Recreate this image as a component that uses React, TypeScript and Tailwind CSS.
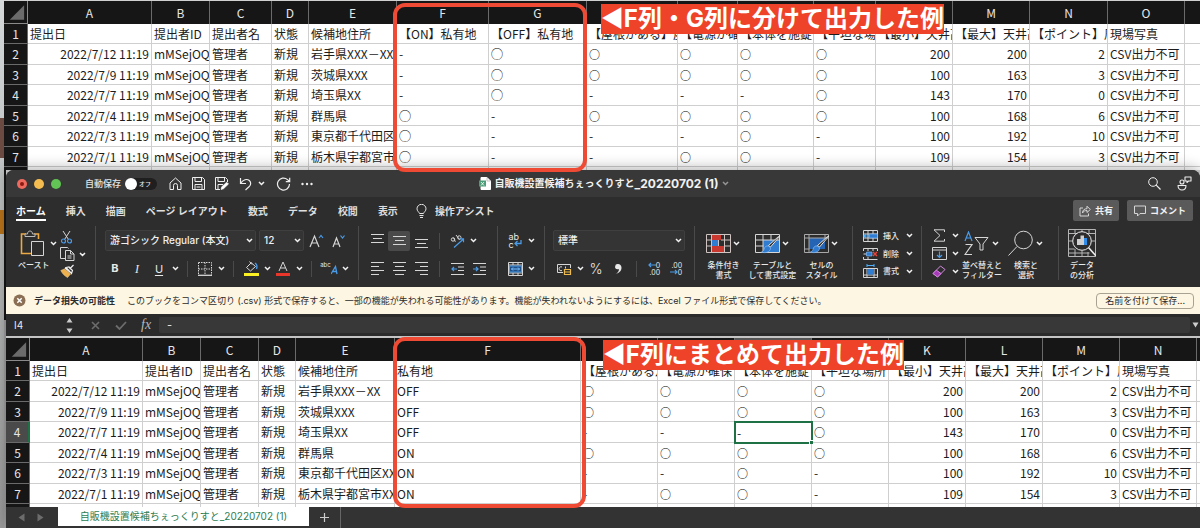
import type { ReactNode } from 'react';

type Column = { letter: string; width: string; title: string; align?: 'right' };

const TOP_COLUMNS: Column[] = [
  { letter: 'A', width: 'w-[124px]', title: '提出日', align: 'right' },
  { letter: 'B', width: 'w-[58px]', title: '提出者ID' },
  { letter: 'C', width: 'w-[62px]', title: '提出者名' },
  { letter: 'D', width: 'w-[37px]', title: '状態' },
  { letter: 'E', width: 'w-[88px]', title: '候補地住所' },
  { letter: 'F', width: 'w-[92px]', title: '【ON】私有地' },
  { letter: 'G', width: 'w-[98px]', title: '【OFF】私有地' },
  { letter: 'H', width: 'w-[91px]', title: '【屋根がある】屋' },
  { letter: 'I', width: 'w-[60px]', title: '【電源が確保' },
  { letter: 'J', width: 'w-[76px]', title: '【本体を施錠' },
  { letter: 'K', width: 'w-[62px]', title: '【平坦な場所' },
  { letter: 'L', width: 'w-[77px]', title: '【最小】天井高', align: 'right' },
  { letter: 'M', width: 'w-[77px]', title: '【最大】天井高', align: 'right' },
  { letter: 'N', width: 'w-[78px]', title: '【ポイント】周', align: 'right' },
  { letter: 'O', width: 'w-[77px]', title: '現場写真' },
];

const BOTTOM_COLUMNS: Column[] = [
  { letter: 'A', width: 'w-[113px]', title: '提出日', align: 'right' },
  { letter: 'B', width: 'w-[58px]', title: '提出者ID' },
  { letter: 'C', width: 'w-[58px]', title: '提出者名' },
  { letter: 'D', width: 'w-[37px]', title: '状態' },
  { letter: 'E', width: 'w-[99px]', title: '候補地住所' },
  { letter: 'F', width: 'w-[186px]', title: '私有地' },
  { letter: 'G', width: 'w-[77px]', title: '【屋根がある】' },
  { letter: 'H', width: 'w-[77px]', title: '【電源が確保' },
  { letter: 'I', width: 'w-[77px]', title: '【本体を施錠' },
  { letter: 'J', width: 'w-[77px]', title: '【平坦な場所で' },
  { letter: 'K', width: 'w-[77px]', title: '【最小】天井高', align: 'right' },
  { letter: 'L', width: 'w-[77px]', title: '【最大】天井高', align: 'right' },
  { letter: 'M', width: 'w-[77px]', title: '【ポイント】周', align: 'right' },
  { letter: 'N', width: 'w-[77px]', title: '現場写真' },
];

const PEOPLE = [
  ['2022/7/12 11:19', 'mMSejOQ', '管理者', '新規', '岩手県XXX－XX'],
  ['2022/7/9 11:19', 'mMSejOQ', '管理者', '新規', '茨城県XXX'],
  ['2022/7/7 11:19', 'mMSejOQ', '管理者', '新規', '埼玉県XX'],
  ['2022/7/4 11:19', 'mMSejOQ', '管理者', '新規', '群馬県'],
  ['2022/7/3 11:19', 'mMSejOQ', '管理者', '新規', '東京都千代田区XX'],
  ['2022/7/1 11:19', 'mMSejOQ', '管理者', '新規', '栃木県宇都宮市XX'],
];

const CHECKS = [
  ['○', '○', '○', '○', '200', '200', '2', 'CSV出力不可'],
  ['○', '○', '○', '○', '100', '163', '3', 'CSV出力不可'],
  ['-', '-', '-', '○', '143', '170', '0', 'CSV出力不可'],
  ['○', '○', '○', '○', '100', '168', '6', 'CSV出力不可'],
  ['-', '-', '○', '-', '100', '192', '10', 'CSV出力不可'],
  ['-', '○', '○', '-', '109', '154', '3', 'CSV出力不可'],
];

const SPLIT = [['-', '◯'], ['-', '◯'], ['-', '◯'], ['◯', '-'], ['◯', '-'], ['◯', '-']];
const MERGED = [['OFF'], ['OFF'], ['OFF'], ['ON'], ['ON'], ['ON']];

const TOP_ROWS = PEOPLE.map((p, i) => [...p, ...SPLIT[i], ...CHECKS[i]]);
const BOTTOM_ROWS = PEOPLE.map((p, i) => [...p, ...MERGED[i], ...CHECKS[i]]);

function CellText({ text }: { text: string }) {
  if (text === '○') return <span className="text-[11px] font-medium text-black">{text}</span>;
  if (text === '◯') return <span className="font-medium text-black">{text}</span>;
  return <>{text}</>;
}

function Sheet({ columns, rows, label, selected }: {
  columns: Column[];
  rows: string[][];
  label: string;
  selected?: { row: number; column: number };
}) {
  const body = [columns.map((c) => c.title), ...rows];
  return (
    <table aria-label={label} className="w-full table-fixed border-separate border-spacing-0 bg-white font-['Noto_Sans_CJK_JP',sans-serif] text-[12px] leading-4 text-[#1c1c1c]">
      <colgroup>
        <col className="w-[24px]" />
        {columns.map((c) => <col key={c.letter} className={c.width} />)}
        <col />
      </colgroup>
      <thead>
        <tr className="h-[23px] bg-[#161616] text-[#e6e6e6]">
          <td className="border-r border-b border-[#8a8a8a] p-0">
            <svg viewBox="0 0 24 22" className="block h-[22px] w-full" aria-hidden="true"><path d="M21 4v15H6z" fill="#6b6b6b" /></svg>
          </td>
          {columns.map((c, i) => (
            <th key={c.letter} scope="col" className={selected?.column === i ? 'border-r border-[#6a6a6a] bg-[#555] p-0 font-normal' : 'border-r border-[#6a6a6a] p-0 font-normal'}>{c.letter}</th>
          ))}
          <td className="p-0" />
        </tr>
      </thead>
      <tbody>
        {body.map((cells, r) => (
          <tr key={r} className="odd:h-5 even:h-[21px]">
            <th scope="row" className={selected?.row === r ? 'border-r-2 border-b border-r-[#1e7145] border-b-[#6a6a6a] bg-[#4a4a4a] p-0 font-normal text-[#e6e6e6]' : 'border-r border-b border-[#6a6a6a] bg-[#161616] p-0 font-normal text-[#e6e6e6]'}>{r + 1}</th>
            {cells.map((text, c) => {
              const isSelected = selected?.row === r && selected.column === c;
              if (isSelected) {
                return (
                  <td key={c} className="relative px-0.5 py-0 outline-2 -outline-offset-1 outline-[#1e7145]">
                    {text}
                    <span className="absolute -right-px -bottom-px size-1 border-t border-l border-white bg-[#1e7145]" />
                  </td>
                );
              }
              return (
                <td key={c} className={columns[c].align === 'right' && r > 0 ? 'overflow-hidden border-r border-b border-[#cfcfcf] px-0.5 py-0 text-right whitespace-nowrap' : 'overflow-hidden border-r border-b border-[#cfcfcf] px-0.5 py-0 text-left whitespace-nowrap'}><CellText text={text} /></td>
              );
            })}
            <td className="border-b border-[#cfcfcf] p-0" />
          </tr>
        ))}
        <tr className="h-[3px]">
          <td className="border-r border-[#6a6a6a] bg-[#161616] p-0" />
          {columns.map((c) => <td key={c.letter} className="border-r border-[#cfcfcf] p-0" />)}
          <td className="p-0" />
        </tr>
      </tbody>
    </table>
  );
}

function Icon({ w, h, children }: { w: number; h: number; children: ReactNode }) {
  return (
    <svg width={w} height={h} viewBox={`0 0 ${w} ${h}`} fill="none" stroke="#d6d6d6" strokeWidth="1" className="shrink-0" aria-hidden="true">
      {children}
    </svg>
  );
}

function Chevron() {
  return (
    <span className="flex w-2.5 shrink-0 items-center justify-center">
      <Icon w={7} h={5}><path d="M1 1l2.500 2.500L6 1" stroke="#f2f2f2" strokeWidth="1.500" /></Icon>
    </span>
  );
}

function Tool({ label, active, menu, children }: { label: string; active?: boolean; menu?: boolean; children: ReactNode }) {
  return (
    <button type="button" aria-label={label} className="flex h-full items-center">
      <span className={active ? 'flex h-5 w-[22px] items-center justify-center rounded-xs bg-[#4a4a4a]' : 'flex w-[22px] items-center justify-center'}>{children}</span>
      {menu && <Chevron />}
    </button>
  );
}

function Sep() {
  return <span className="mr-1.5 ml-[7px] h-4 w-px shrink-0 bg-[#4a4a4a]" />;
}

function Row({ children }: { children: ReactNode }) {
  return <div className="flex h-[21px] items-center">{children}</div>;
}

function Select({ label, value, className }: { label: string; value: string; className: string }) {
  return (
    <span className={`relative block h-[21px] ${className}`}>
      <select aria-label={label} defaultValue={value} className="block h-full w-full appearance-none rounded-xs border border-[#3f3f3f] bg-[#343434] pl-1 text-[10px] font-medium text-[#f0f0f0]">
        <option>{value}</option>
      </select>
      <span className="pointer-events-none absolute inset-y-0 right-0.5 flex items-center"><Chevron /></span>
    </span>
  );
}

function BigTool({ lines, width, menu = true, children }: { lines: string[]; width: string; menu?: boolean; children: ReactNode }) {
  return (
    <button type="button" className={`flex flex-col items-center ${width}`}>
      <span className="flex h-[34px] items-center justify-center gap-px">{children}{menu && <Chevron />}</span>
      {lines.map((l) => <span key={l} className="text-[8px] leading-[10px] font-medium whitespace-nowrap">{l}</span>)}
    </button>
  );
}

function Lines({ rows }: { rows: [number, number, number][] }) {
  return <Icon w={13} h={15}>{rows.map(([x1, x2, y]) => <path key={y} d={`M${x1} ${y}.5H${x2}`} />)}</Icon>;
}

function Brush() {
  return (
    <>
      <path d="M25 6l-9.500 11-2-1.500L23.500 6.500z" fill="#2d2d2d" stroke="#e4e4e4" />
      <path d="M13.500 16c-2.500-.5-4 1-4.500 3.500-.3 1.500-1.500 2-2.500 2.500 3 1.500 9 .5 9-4z" fill="#2f7cd0" stroke="#8cbcf0" strokeWidth=".7" />
    </>
  );
}

const SHEET_NAME = '自販機設置候補ちぇっくりすと';

function TitleBar() {
  return (
    <header className="flex h-[27px] items-center bg-[#383838]">
      <div className="flex flex-1 items-center pl-[11px]">
        <div className="flex gap-[7px]">
          <button type="button" aria-label="閉じる" className="flex size-2.5 items-center justify-center rounded-full bg-[#ee6a5f]"><span className="size-1 rounded-full bg-[#8c1a10]" /></button>
          <button type="button" aria-label="しまう" className="size-2.5 rounded-full bg-[#f5bd4f]" />
          <button type="button" aria-label="拡大" className="size-2.5 rounded-full bg-[#61c454]" />
        </div>
        <label className="ml-6 flex items-center gap-1 text-[9px] font-medium text-[#e4e4e4]">
          自動保存
          <span className="relative flex h-3 w-8 items-center justify-end rounded-full bg-[#1f1f1f] pr-1.5">
            <input type="checkbox" className="absolute left-0 size-3 appearance-none rounded-full bg-white" />
            <span className="text-[6px] leading-none">オフ</span>
          </span>
        </label>
        <div className="ml-3 flex items-center gap-2.5">
          <button type="button" aria-label="ホームに戻る"><Icon w={13} h={13}><path d="M1 6l5.500-5L12 6v6.500H8.500v-4a2 2 0 0 0-4 0v4H1z" stroke="#eee" /></Icon></button>
          <button type="button" aria-label="保存"><Icon w={13} h={13}><path d="M.5.5h10l2 2v10H.5zM3 .5v4h6.500v-4M3 12.500V7.500h7v5M4.500 10h4" stroke="#eee" /></Icon></button>
          <button type="button" aria-label="名前を付けて保存"><Icon w={14} h={13}><path d="M5 12.500H.5V.5h10l2 2V5M3 .5v4h6.500v-4M3 12V7.500h5" stroke="#eee" /><path d="M6 12.500l.7-2.700 5-4.600 1.800 1.800-5 4.800z" fill="#fff" stroke="#fff" strokeWidth=".6" /></Icon></button>
          <button type="button" aria-label="元に戻す" className="flex items-center gap-1"><Icon w={13} h={14}><path d="M1.500 1v5.500H7M1.500 6.500C4 2.500 8 1.500 10.300 3.500c2.200 2 1.500 4.500-.3 6.300L6.500 13" stroke="#eee" strokeWidth="1.200" /></Icon><Chevron /></button>
          <button type="button" aria-label="やり直し"><Icon w={15} h={14}><path d="M13.500 7a6 6 0 1 1-2-4.400L13.500 4.500M13.700.7v4H9.800" stroke="#eee" strokeWidth="1.200" /></Icon></button>
          <button type="button" aria-label="その他"><Icon w={12} h={4}><g fill="#eee" stroke="none"><circle cx="1.500" cy="2" r="1.200" /><circle cx="6" cy="2" r="1.200" /><circle cx="10.500" cy="2" r="1.200" /></g></Icon></button>
        </div>
      </div>
      <h1 className="flex items-center text-[10px] font-bold text-[#f2f2f2]">
        <Icon w={12} h={13}><path d="M2 .5h6l3.500 3.500v8.500H2z" fill="#fff" stroke="#fff" /><path d="M8 .5v3.500h3.500" stroke="#aaa" strokeWidth=".7" /><rect x="0" y="3.500" width="7" height="6" fill="#4d9d78" stroke="none" /><path d="M2 5l3 3.500M5 5L2 8.500" stroke="#fff" strokeWidth=".8" /></Icon>
        <span className="ml-1">{SHEET_NAME}</span><span className="text-[12px]">_20220702 (1)</span>
        <span className="ml-0.5 opacity-50"><Chevron /></span>
      </h1>
      <div className="flex flex-1 items-center justify-end gap-4 pr-2">
        <button type="button" aria-label="検索"><Icon w={13} h={13}><circle cx="5" cy="5" r="4.300" stroke="#eee" /><path d="M8.200 8.200l4.300 4.300" stroke="#eee" strokeWidth="1.200" /></Icon></button>
        <button type="button" aria-label="共同編集"><Icon w={15} h={15}><path d="M8 1h6v4h-2.500L10 6.500V5H8zM1 9.500h8c0 6-8 6-8 0z" stroke="#eee" strokeWidth="1.100" strokeLinejoin="round" /><circle cx="5" cy="6" r="2" stroke="#eee" strokeWidth="1.100" /></Icon></button>
      </div>
    </header>
  );
}

const TABS = ['挿入', '描画', 'ページ レイアウト', '数式', 'データ', '校閲', '表示'];

function RibbonTabs() {
  return (
    <nav className="flex items-center pt-[3px] pr-[7px] pl-2.5 text-[10px] font-bold text-[#dedede]">
      <div className="flex flex-1 items-center gap-5">
        <button type="button" className="border-b-2 border-white pt-0.5 leading-4 text-white">ホーム</button>
        {TABS.map((t) => <button key={t} type="button" className="leading-4">{t}</button>)}
        <button type="button" className="-ml-0.5 flex items-center gap-2 leading-4">
          <Icon w={11} h={14}><path d="M3.500 9.500C3 8 1 7 1 4.800a4.500 4.500 0 0 1 9 0C10 7 8 8 7.500 9.500zM3.500 11.500h4M4 13.500h3" stroke="#e4e4e4" /></Icon>
          操作アシスト
        </button>
      </div>
      <div className="flex gap-2">
        <button type="button" className="flex h-[21px] items-center gap-1 rounded-xs bg-[#5a5a5a] px-1.5 text-[9px] text-[#f2f2f2]">
          <Icon w={12} h={12}><path d="M4 3H1v8h8.500V8.500M3.500 8c0-3 2-4.300 4.500-4.300V1.200L11.300 4.500 8 7.500V5.500C6 5.500 4.500 6 3.500 8z" /></Icon>
          共有
        </button>
        <button type="button" className="flex h-[21px] items-center gap-1 rounded-xs bg-[#5a5a5a] px-[7px] text-[9px] text-[#f2f2f2]">
          <Icon w={12} h={12}><path d="M.5 1h11v7.500H6L3.500 11V8.500h-3z" /></Icon>
          コメント
        </button>
      </div>
    </nav>
  );
}

function Ribbon() {
  return (
    <div className="flex h-[66px] items-start overflow-hidden pt-[5px] text-[#e8e8e8]">
      <section aria-label="クリップボード" className="flex h-[54px] w-[90px] shrink-0 border-r border-[#4a4a4a] pl-3">
        <button type="button" className="flex w-10 flex-col items-start">
          <span className="flex h-[34px] items-center gap-1 pl-0.5">
            <Icon w={24} h={27}><path d="M6 4H1.500v19.500H11M14 4h4.500v5" stroke="#eda944" strokeWidth="1.600" /><path d="M5 6.500V4h2.500C7.500 0 12.500 0 12.500 4H15v2.500z" fill="#2d2d2d" stroke="#bbb" /><path d="M11.500 11.500h12v14h-12z" fill="#2d2d2d" /></Icon>
            <Chevron />
          </span>
          <span className="text-[8px] leading-[10px] font-medium">ペースト</span>
        </button>
        <div className="flex flex-col pt-0.5">
          <button type="button" aria-label="切り取り" className="flex h-[18px] items-center pl-0.5"><Icon w={13} h={14}><path d="M3 1l5.500 8.500M10 1L4.500 9.500" /><circle cx="3.500" cy="11" r="2" stroke="#4a9be8" strokeWidth="1.200" /><circle cx="9.500" cy="11" r="2" stroke="#4a9be8" strokeWidth="1.200" /></Icon></button>
          <button type="button" aria-label="コピー" className="flex h-[19px] items-center gap-0.5 pl-0.5"><Icon w={15} h={14}><path d="M5 11.500H.5V.5h7l1 1M5.500 3.500h5l3.500 3.500v6.500H5.500zM10.500 3.500V7H14M7.500 9h4M7.500 11h4" /></Icon><Chevron /></button>
          <button type="button" aria-label="書式のコピー" className="flex h-[18px] items-center pl-0.5"><Icon w={15} h={14}><path d="M13.500 1L9.500 5M5 4l6 5M6 3.500l3-.5 3.500 3.500-1 3z" stroke="#eee" strokeWidth="1.200" /><path d="M4.500 5l6 5-3 3.500C5 12 2.500 10 .8 6.500z" fill="#eeb04c" stroke="#f5cf8d" strokeWidth=".6" /></Icon></button>
        </div>
      </section>

      <section aria-label="フォント" className="flex h-[54px] w-[263px] shrink-0 flex-col gap-[7px] border-r border-[#4a4a4a] pt-1 pl-2">
        <Row>
          <Select label="フォント名" value="游ゴシック Regular (本文)" className="ml-px w-[151px]" />
          <Select label="フォント サイズ" value="12" className="mr-px ml-[3px] w-[45px]" />
          <Tool label="フォント サイズの拡大"><Icon w={15} h={14}><path d="M1 13L5.500 2 10 13M2.500 9h6" strokeWidth="1.200" /><path d="M10 4l2-2.500L14 4" stroke="#4a9be8" strokeWidth="1.200" /></Icon></Tool>
          <Tool label="フォント サイズの縮小"><Icon w={15} h={14}><path d="M2 13L5.500 4 9 13M3.200 10h4.600" strokeWidth="1.200" /><path d="M9.500 1.500l2 2.500 2-2.500" stroke="#4a9be8" strokeWidth="1.200" /></Icon></Tool>
        </Row>
        <Row>
          <Tool label="太字"><span className="text-[11px] font-bold">B</span></Tool>
          <Tool label="斜体"><span className="font-['Liberation_Serif',serif] text-[12px] italic">I</span></Tool>
          <Tool label="下線" menu><span className="text-[11px] leading-3 underline underline-offset-2">U</span></Tool>
          <Sep />
          <Tool label="罫線" menu><Icon w={14} h={14}><path d="M.5.5h13v13M.5.5v13M7 .5v13M.5 7h13" strokeDasharray="1.500 1" /><path d="M0 13.300h14" strokeWidth="1.300" /></Icon></Tool>
          <Sep />
          <Tool label="塗りつぶしの色" menu><Icon w={15} h={15}><path d="M7 2L2.500 6.500 6.500 10l5-4.500L7 1.500zM5.500.5L8 3.500" /><path d="M11 2c1.500 1 2.500 3 1.500 6" stroke="#4a9be8" strokeWidth="1.400" /><path d="M0 13.500h15" stroke="#fbf024" strokeWidth="3" /></Icon></Tool>
          <Tool label="フォントの色" menu><Icon w={14} h={15}><path d="M3 10L7 1l4 9M4.500 7h5" /><path d="M0 13.500h14" stroke="#e8362a" strokeWidth="3" /></Icon></Tool>
          <Sep />
          <Tool label="ふりがな" menu><span className="flex h-4 items-start"><span className="text-[6px] leading-[7px]">abc</span><Icon w={7} h={14}><path d="M0 13L4.500 5.500 6 13M1.500 10.500H6" stroke="#4a9be8" strokeWidth="1.300" /></Icon></span></Tool>
        </Row>
      </section>

      <section aria-label="配置" className="flex h-[54px] w-[139px] shrink-0 flex-col gap-[7px] border-r border-[#4a4a4a] pt-1 pl-[7px]">
        <Row>
          <Tool label="上揃え"><Lines rows={[[0, 13, 1], [2, 11, 5], [0, 13, 9]]} /></Tool>
          <Tool label="上下中央揃え" active><Lines rows={[[0, 13, 3], [2, 11, 7], [0, 13, 11]]} /></Tool>
          <Tool label="下揃え"><Lines rows={[[0, 13, 6], [2, 11, 10], [0, 13, 14]]} /></Tool>
          <Sep />
          <Tool label="方向" menu><Icon w={15} h={14}><circle cx="3" cy="5.500" r="1.700" /><path d="M5.300 7.800L3.700 3.700M6 1l3.500 4.500" /><circle cx="9.300" cy="3.500" r="1.700" /><path d="M4 13.500L13.500 5M10 4.800h3.500v3.500" stroke="#4a9be8" strokeWidth="1.200" /></Icon></Tool>
        </Row>
        <Row>
          <Tool label="左揃え"><Lines rows={[[0, 13, 1], [0, 8, 5], [0, 13, 9], [0, 8, 13]]} /></Tool>
          <Tool label="中央揃え"><Lines rows={[[0, 13, 1], [2, 11, 5], [0, 13, 9], [2, 11, 13]]} /></Tool>
          <Tool label="右揃え"><Lines rows={[[0, 13, 1], [5, 13, 5], [0, 13, 9], [5, 13, 13]]} /></Tool>
          <Sep />
          <Tool label="インデントを減らす"><Icon w={13} h={12}><path d="M0 .5h13M7 4h6M7 7.500h6M0 11.500h13" /><path d="M6 6H1M3 4L1 6l2 2" stroke="#4a9be8" strokeWidth="1.200" /></Icon></Tool>
          <Tool label="インデントを増やす"><Icon w={13} h={12}><path d="M0 .5h13M7 4h6M7 7.500h6M0 11.500h13" /><path d="M0 6h5M3 4l2 2-2 2" stroke="#4a9be8" strokeWidth="1.200" /></Icon></Tool>
        </Row>
      </section>

      <section aria-label="折り返しと結合" className="flex h-[54px] w-[47px] shrink-0 flex-col gap-[7px] border-r border-[#4a4a4a] pt-1 pl-1.5">
        <Row>
          <Tool label="折り返して全体を表示する" menu><span className="flex flex-col items-start text-[9px] leading-[7px]"><span>ab</span><span className="flex items-center">c<Icon w={8} h={8}><path d="M7 0v3.500H1.500M3.500 1l-2.500 2.500L3.500 6" stroke="#4a9be8" strokeWidth="1.300" /></Icon></span></span></Tool>
        </Row>
        <Row>
          <Tool label="セルを結合して中央揃え" menu><Icon w={15} h={14}><path d="M.5.5h14v13H.5zM.5 3h14M.5 11h14M5 .5V3M10 .5V3M5 11v2.500M10 11v2.500" /><path d="M1.500 4h12v6h-12z" fill="#1d4f86" stroke="#4a9be8" /><path d="M3.500 7h8M5 5.500L3.500 7 5 8.500M10 5.500L11.500 7 10 8.500" stroke="#7cc0ff" /></Icon></Tool>
        </Row>
      </section>

      <section aria-label="数値" className="flex h-[54px] w-[150px] shrink-0 flex-col gap-[7px] border-r border-[#4a4a4a] pt-1 pl-2">
        <Row><Select label="表示形式" value="標準" className="w-[132px]" /></Row>
        <Row>
          <Tool label="通貨" menu><Icon w={15} h={12}><path d="M.5 1.500h13V5M.5 1.500v8H6M5 4a2 2 0 1 0 0 3.500M8.500 3.500v2" /><path d="M7.500 6.500h6v5h-6zM7.500 9h6" fill="#2d2d2d" stroke="#eebc4c" strokeWidth="1.200" /></Icon></Tool>
          <Tool label="パーセント"><span className="text-[14px] leading-4 font-light">%</span></Tool>
          <Tool label="桁区切り"><Icon w={9} h={12}><path d="M4 1a2.600 2.600 0 0 0-.5 5.300C4.500 6.500 5 6 5 6 5 8.500 3.500 10 1.500 11c4-.8 6-3.500 6-6.200C7.500 2.500 6 1 4 1z" fill="#e8e8e8" stroke="none" /></Icon></Tool>
          <Sep />
          <Tool label="小数点以下の表示桁数を増やす"><span className="flex flex-col items-end text-[7px] leading-[7px]"><span className="flex items-center"><Icon w={8} h={6}><path d="M8 3H1M3 1L1 3l2 2" stroke="#4a9be8" strokeWidth="1.200" /></Icon>0</span><span>.00</span></span></Tool>
          <Tool label="小数点以下の表示桁数を減らす"><span className="flex flex-col items-end text-[7px] leading-[7px]"><span>.00</span><span className="flex items-center"><Icon w={8} h={6}><path d="M0 3h7M5 1l2 2-2 2" stroke="#4a9be8" strokeWidth="1.200" /></Icon>0</span></span></Tool>
        </Row>
      </section>

      <section aria-label="スタイル" className="flex h-[54px] w-[158px] shrink-0 border-r border-[#4a4a4a] pl-1">
        <BigTool lines={['条件付き', '書式']} width="w-[49px]">
          <Icon w={25} h={27}>
            <path d="M5 4h10v6H5zM5 16h13v6H5z" fill="#c8382e" stroke="none" />
            <path d="M5 10h7v6H5z" fill="#2f7cd0" stroke="none" />
            <path d="M.5 4.500h24v18H.5zM.5 10h4.500M15 10h9.500M.5 16h4.500M18 16h6.500M5.500 4.500v18M12.500 10v6M18.500 4.500v18" stroke="#cfc4c2" />
          </Icon>
        </BigTool>
        <BigTool lines={['テーブルと', 'して書式設定']} width="w-[49px]">
          <Icon w={25} h={27}>
            <path d="M8 10h16v12H8z" fill="#2f7cd0" stroke="none" />
            <path d="M.5 4.500h24v18H.5zM.5 10h24M.5 16h8M8 4.500v18M16 4.500v6" />
            <Brush />
          </Icon>
        </BigTool>
        <BigTool lines={['セルの', 'スタイル']} width="w-[49px]">
          <Icon w={25} h={27}>
            <path d="M5 8h16v11H5z" fill="#2564b4" stroke="none" />
            <path d="M.5 4.500h24v18H.5zM.5 8h24M.5 19h5M5 4.500v18M21 4.500v4" stroke="#a8a8a8" />
            <Brush />
          </Icon>
        </BigTool>
      </section>

      <section aria-label="セル" className="flex h-[54px] w-[69px] shrink-0 flex-col border-r border-[#4a4a4a] pt-px pl-2.5 text-[8px] font-medium">
        <button type="button" className="flex h-[18px] items-center gap-[5px]"><Icon w={15} h={12}><path d="M.5.5h14v11H.5zM.5 4h14M.5 8h14M5 .5v11M10 .5v11" /><path d="M6 4h8.500v4H6z" fill="#2f7cd0" stroke="#8cc4ff" strokeWidth=".6" /><path d="M7 6H1M3 4L1 6l2 2" stroke="#4ab0ff" strokeWidth="1.200" /></Icon>挿入<Chevron /></button>
        <button type="button" className="flex h-[19px] items-center gap-[5px]"><Icon w={15} h={12}><path d="M.5 3V.5h14V3M.5 9v2.500h14M5 .5V3M10 .5V3M5 9v2.500M.5 6H4" /><path d="M3.500 4H9v4H3.500z" fill="#2f7cd0" stroke="#8cc4ff" strokeWidth=".6" /><path d="M10 4l4 4M14 4l-4 4" stroke="#e8443a" strokeWidth="1.400" /></Icon>削除<Chevron /></button>
        <button type="button" className="flex h-[18px] items-center gap-[5px]"><Icon w={15} h={14}><path d="M.5 4.500h14v9H.5zM.5 11h14M4 4.500v9M11 4.500v9" /><path d="M4 5h7v5.500H4z" fill="#2f7cd0" stroke="none" /><path d="M4 1.500h7M4 0v3M11 0v3" stroke="#4ab0ff" /></Icon>書式<Chevron /></button>
      </section>

      <section aria-label="編集" className="flex h-[54px] w-[137px] shrink-0 border-r border-[#4a4a4a] pl-1.5">
        <div className="flex flex-col pt-px">
          <div className="h-[18px]"><Tool label="合計" menu><Icon w={12} h={13}><path d="M11.500 3V.8H1L7 6.500l-6 5.700h10.500V10" /></Icon></Tool></div>
          <div className="h-[19px]"><Tool label="フィル" menu><Icon w={15} h={13}><path d="M.5.5h14v12H.5zM.5 3h14" /><path d="M7.500 4.500v6M5 8l2.500 2.500L10 8" stroke="#4a9be8" strokeWidth="1.200" /></Icon></Tool></div>
          <div className="h-[18px]"><Tool label="クリア" menu><Icon w={14} h={13}><path d="M1 8.500L8.500 1 13 4.500 5.500 12z" stroke="#d58ae0" /><path d="M1 8.500l3.300-3.300L9 8.500 5.500 12z" fill="#a63ab8" stroke="#d58ae0" /></Icon></Tool></div>
        </div>
        <BigTool lines={['並べ替えと', 'フィルター']} width="w-11">
          <Icon w={25} h={25}><path d="M1 10L4.500 1 8 10M2.200 7h4.600" stroke="#4a9be8" strokeWidth="1.200" /><path d="M1.500 13.500h6.500L1 23.500h7" strokeWidth="1.200" /><path d="M11 6.500h13l-5 6.500v6h-3v-6z" /></Icon>
        </BigTool>
        <BigTool lines={['検索と', '選択']} width="w-11">
          <Icon w={25} h={27}><circle cx="15.500" cy="10" r="8.800" /><path d="M9 16.500L.5 25.500" /></Icon>
        </BigTool>
      </section>

      <section aria-label="分析" className="flex h-[54px] shrink-0">
        <BigTool lines={['データ', 'の分析']} width="w-[46px]" menu={false}>
          <Icon w={28} h={28}><path d="M.5.5h27v27H.5zM.5 4.500h27M.5 12h4M.5 20h6M.5 24h21M7 20v7.500M14 22v5.500M20 23v4.500M24 12h3.500M7 .5v4M14 .5v3M21 .5v4" stroke="#b5b5b5" /><circle cx="14" cy="12" r="9.300" fill="#2d2d2d" stroke="#eee" /><path d="M20.500 18.500L28 27" stroke="#eee" strokeWidth="1.500" /><path d="M9 10h3.500v6H9zM12.500 6.500H16V16h-3.500z" fill="#d0d0d0" stroke="none" /><path d="M16 9h3v7h-3z" fill="#2f8ce8" stroke="none" /></Icon>
        </BigTool>
      </section>
    </div>
  );
}

function WarningBar() {
  return (
    <div role="alert" className="flex h-[27px] items-center bg-[#fdf6e2] pr-1.5 pl-[7px] text-[9px] text-[#2b2b2b]">
      <button type="button" aria-label="閉じる"><Icon w={13} h={13}><circle cx="6.500" cy="6.500" r="6" fill="#8b6f55" stroke="none" /><path d="M4.300 4.300l4.400 4.400M8.700 4.300L4.300 8.700" stroke="#fff" strokeWidth="1.500" /></Icon></button>
      <strong className="ml-2 whitespace-nowrap">データ損失の可能性</strong>
      <p className="ml-3 flex-1 whitespace-nowrap">このブックをコンマ区切り (.csv) 形式で保存すると、一部の機能が失われる可能性があります。機能が失われないようにするには、Excel ファイル形式で保存してください。</p>
      <button type="button" className="h-4 rounded-sm border border-[#a8a292] px-2 leading-3 whitespace-nowrap">名前を付けて保存...</button>
    </div>
  );
}

function FormulaBar() {
  return (
    <div className="flex h-[22px] items-center bg-[#2b2b2b] text-[#e8e8e8]">
      <input aria-label="名前ボックス" defaultValue="I4" className="w-[60px] bg-transparent pl-2 text-[10px] outline-none" />
      <button type="button" aria-label="名前の一覧" className="w-[11px]"><Icon w={7} h={15}><path d="M3.500 0L6.500 4.500h-6zM3.500 15l3-4.500h-6z" fill="#ccc" stroke="none" /></Icon></button>
      <button type="button" aria-label="キャンセル" className="ml-3.5 w-2.5"><Icon w={9} h={9}><path d="M1 1l7 7M8 1L1 8" stroke="#6c6c6c" strokeWidth="1.600" /></Icon></button>
      <button type="button" aria-label="入力" className="ml-3.5 w-3"><Icon w={12} h={9}><path d="M1 4.500L4.500 8 11 1" stroke="#6c6c6c" strokeWidth="1.800" /></Icon></button>
      <span className="ml-3.5 font-['Liberation_Serif',serif] text-[14px] leading-4 text-[#b8b8b8] italic">fx</span>
      <input aria-label="数式" defaultValue="-" className="ml-2 h-4 flex-1 rounded-xs bg-[#383838] pl-2 text-[11px] outline-none" />
      <button type="button" aria-label="数式バーの展開" className="flex w-2.5 justify-center"><Icon w={7} h={6}><path d="M.5.5h6l-3 5z" fill="#ccc" stroke="none" /></Icon></button>
    </div>
  );
}

function SheetTabs() {
  return (
    <footer className="flex h-[21px] items-start bg-[#333]">
      <div className="flex h-full w-[52px] items-center gap-3 pl-3">
        <button type="button" aria-label="前のシート"><Icon w={7} h={9}><path d="M6.500.5v8l-6-4z" fill="#6c6c6c" stroke="none" /></Icon></button>
        <button type="button" aria-label="次のシート"><Icon w={7} h={9}><path d="M.5.5v8l6-4z" fill="#6c6c6c" stroke="none" /></Icon></button>
      </div>
      <button type="button" className="h-[19px] w-[251px] bg-white text-[10px] text-[#2d7d52]">{SHEET_NAME}_20220702 (1)</button>
      <button type="button" aria-label="新しいシート" className="flex h-full w-8 items-center justify-center border-r border-[#666]"><Icon w={9} h={9}><path d="M4.500 0v9M0 4.500h9" stroke="#ccc" strokeWidth="1.200" /></Icon></button>
    </footer>
  );
}

function DesktopEdge() {
  return (
    <div className="flex w-1 shrink-0 flex-col bg-linear-to-b from-[#d4d8d8] to-[#9a9a9a]">
      <div className="mt-[118px] h-10 bg-[#6b4a42]" />
      <div className="mt-[52px] h-6 bg-[#b8731a]" />
    </div>
  );
}

function Callout({ children, className }: { children: ReactNode; className: string }) {
  return <p className={`absolute bg-[#ee4328] text-[24px] leading-[30px] font-bold whitespace-nowrap text-white ${className}`}>{children}</p>;
}

export default function App() {
  return (
    <main className="relative flex overflow-hidden bg-[#d4d4d4] font-['Inter','Noto_Sans_CJK_JP',sans-serif]">
      <DesktopEdge />
      <div className="min-w-0 flex-1">
        <div className="border-t border-[#d0d0d0]">
          <Sheet columns={TOP_COLUMNS} rows={TOP_ROWS} label="F列・G列に分けて出力" />
        </div>
        <div className="flex">
          <div className="w-0.5 shrink-0 bg-[#a0a0a0]"><div className="h-[150px] bg-[#161616]" /></div>
          <div className="relative min-w-0 flex-1 overflow-hidden rounded-t-lg bg-[#2d2d2d] shadow-[0_-2px_14px_rgba(0,0,0,0.3)]">
            <TitleBar />
            <RibbonTabs />
            <Ribbon />
            <WarningBar />
            <FormulaBar />
            <div className="border-t-2 border-[#c4c4c4]">
              <Sheet columns={BOTTOM_COLUMNS} rows={BOTTOM_ROWS} label="F列にまとめて出力" selected={{ row: 3, column: 8 }} />
            </div>
            <SheetTabs />
          </div>
        </div>
      </div>
      <div className="absolute top-[3px] left-[393px] h-[169px] w-[194px] rounded-xl border-4 border-[#ee4a34]" />
      <div className="absolute top-[337px] left-[393px] h-[171px] w-[193px] rounded-xl border-4 border-[#ee4a34]" />
      <Callout className="top-1 left-[601px]">◀F列・G列に分けて出力した例</Callout>
      <Callout className="top-[340px] left-[603px]">◀F列にまとめて出力した例</Callout>
    </main>
  );
}
